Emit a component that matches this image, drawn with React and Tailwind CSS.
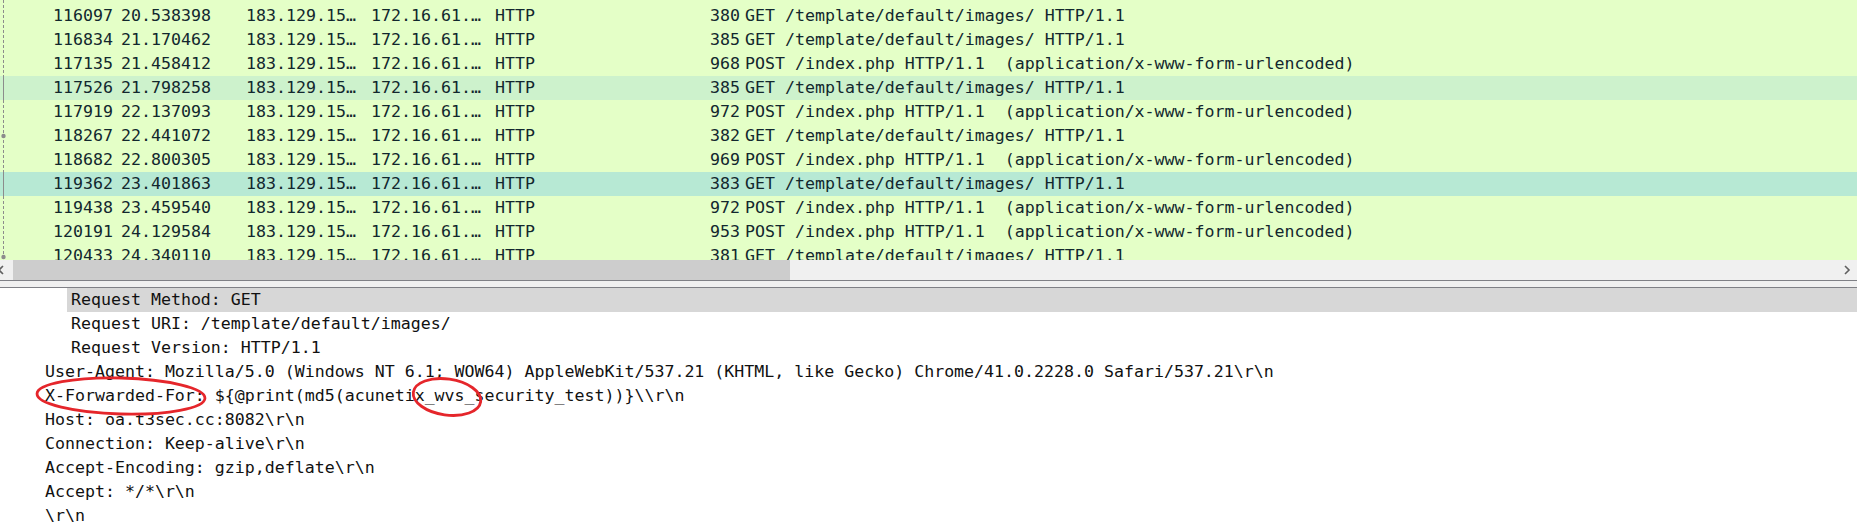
import React from "react";

const GET = "GET /template/default/images/ HTTP/1.1";
const POST = "POST /index.php HTTP/1.1  (application/x-www-form-urlencoded)";

const rows = [
  ["116097", "20.538398", "380", GET, ""],
  ["116834", "21.170462", "385", GET, ""],
  ["117135", "21.458412", "968", POST, ""],
  ["117526", "21.798258", "385", GET, "a"],
  ["117919", "22.137093", "972", POST, ""],
  ["118267", "22.441072", "382", GET, ""],
  ["118682", "22.800305", "969", POST, ""],
  ["119362", "23.401863", "383", GET, "b"],
  ["119438", "23.459540", "972", POST, ""],
  ["120191", "24.129584", "953", POST, ""],
  ["120433", "24.340110", "381", GET, ""],
];

const mono = { fontFamily: '"DejaVu Sans Mono", "Liberation Mono", monospace' };

function PacketRow({ r }) {
  const bg =
    r[4] === "a" ? "bg-[#cdf2cc]" : r[4] === "b" ? "bg-[#b7e9d4]" : "bg-[#e4ffc7]";
  return (
    <div className={`flex h-6 shrink-0 items-center whitespace-pre leading-6 ${bg}`}>
      <div className="w-[40px] shrink-0" />
      <div className="w-[73px] shrink-0 text-right">{r[0]}</div>
      <div className="ml-[8px] w-[125px] shrink-0">{r[1]}</div>
      <div className="w-[125px] shrink-0">183.129.15…</div>
      <div className="w-[124px] shrink-0">172.16.61.…</div>
      <div className="w-[150px] shrink-0">HTTP</div>
      <div className="w-[95px] shrink-0 text-right">{r[2]}</div>
      <div className="ml-[5px] shrink-0">{r[3]}</div>
    </div>
  );
}

function DetailRow({ indent, children, selected }) {
  return (
    <div className="flex h-6 shrink-0 whitespace-pre leading-6">
      <div style={{ width: indent }} className="shrink-0" />
      <div className={`flex-1 pl-[4px] ${selected ? "bg-[#d7d7d7]" : ""}`}>{children}</div>
    </div>
  );
}

export default function App() {
  return (
    <div
      className="flex h-[529px] w-[1857px] flex-col overflow-hidden bg-white text-[16.6px] text-[#12272e]"
      style={mono}
    >
      {/* packet list */}
      <div className="relative flex h-[260px] shrink-0 flex-col overflow-hidden bg-[#e4ffc7] pt-[4px]">
        {rows.map((r) => (
          <PacketRow key={r[0]} r={r} />
        ))}
        <svg className="absolute left-0 top-0" width="8" height="260">
          <line x1="3.5" y1="0" x2="3.5" y2="76" stroke="#8c8c8c" strokeWidth="1" strokeDasharray="3 2" />
          <line x1="3.5" y1="76" x2="3.5" y2="100" stroke="#8c8c8c" strokeWidth="1" />
          <line x1="3.5" y1="100" x2="3.5" y2="172" stroke="#8c8c8c" strokeWidth="1" strokeDasharray="3 2" />
          <line x1="3.5" y1="172" x2="3.5" y2="196" stroke="#8c8c8c" strokeWidth="1" />
          <line x1="3.5" y1="196" x2="3.5" y2="257" stroke="#8c8c8c" strokeWidth="1" strokeDasharray="3 2" />
          <circle cx="3.5" cy="136" r="2.2" fill="#8c8c8c" />
          <circle cx="3.5" cy="257" r="2.2" fill="#8c8c8c" />
        </svg>
      </div>

      {/* horizontal scrollbar */}
      <div className="flex h-[20px] shrink-0 items-center bg-[#f0f0f0]">
        <div className="flex w-[13px] shrink-0 items-center">
          <svg width="8" height="10" viewBox="0 0 8 10" className="-ml-[3px]">
            <path d="M6 1 L2 5 L6 9" fill="none" stroke="#606060" strokeWidth="1.6" />
          </svg>
        </div>
        <div className="h-full w-[777px] shrink-0 bg-[#cdcdcd]" />
        <div className="flex-1" />
        <div className="flex w-[20px] shrink-0 items-center justify-center">
          <svg width="8" height="10" viewBox="0 0 8 10">
            <path d="M2 1 L6 5 L2 9" fill="none" stroke="#606060" strokeWidth="1.6" />
          </svg>
        </div>
      </div>

      {/* splitter */}
      <div className="h-px shrink-0 bg-[#7f8086]" />
      <div className="h-[6px] shrink-0 bg-[#f0f0f0]" />
      <div className="h-px shrink-0 bg-[#7f8086]" />

      {/* details pane */}
      <div className="relative flex flex-1 flex-col text-[#111111]">
        <DetailRow indent={67} selected>Request Method: GET</DetailRow>
        <DetailRow indent={67}>Request URI: /template/default/images/</DetailRow>
        <DetailRow indent={67}>Request Version: HTTP/1.1</DetailRow>
        <DetailRow indent={41}>
          {"User-Agent: Mozilla/5.0 (Windows NT 6.1; WOW64) AppleWebKit/537.21 (KHTML, like Gecko) Chrome/41.0.2228.0 Safari/537.21\\r\\n"}
        </DetailRow>
        <DetailRow indent={41}>
          {"X-Forwarded-For: ${@print(md5(acunetix_wvs_security_test))}\\\\r\\n"}
        </DetailRow>
        <DetailRow indent={41}>{"Host: oa.t3sec.cc:8082\\r\\n"}</DetailRow>
        <DetailRow indent={41}>{"Connection: Keep-alive\\r\\n"}</DetailRow>
        <DetailRow indent={41}>{"Accept-Encoding: gzip,deflate\\r\\n"}</DetailRow>
        <DetailRow indent={41}>{"Accept: */*\\r\\n"}</DetailRow>
        <DetailRow indent={41}>{"\\r\\n"}</DetailRow>

        <svg className="pointer-events-none absolute left-0 top-0" width="600" height="160">
          <ellipse
            cx="121"
            cy="108"
            rx="84"
            ry="18"
            fill="none"
            stroke="#e5262b"
            strokeWidth="2.8"
            transform="rotate(1.5 121 108)"
          />
          <ellipse
            cx="447"
            cy="109"
            rx="34"
            ry="18"
            fill="none"
            stroke="#e5262b"
            strokeWidth="2.8"
            transform="rotate(8 447 109)"
          />
        </svg>
      </div>
    </div>
  );
}
